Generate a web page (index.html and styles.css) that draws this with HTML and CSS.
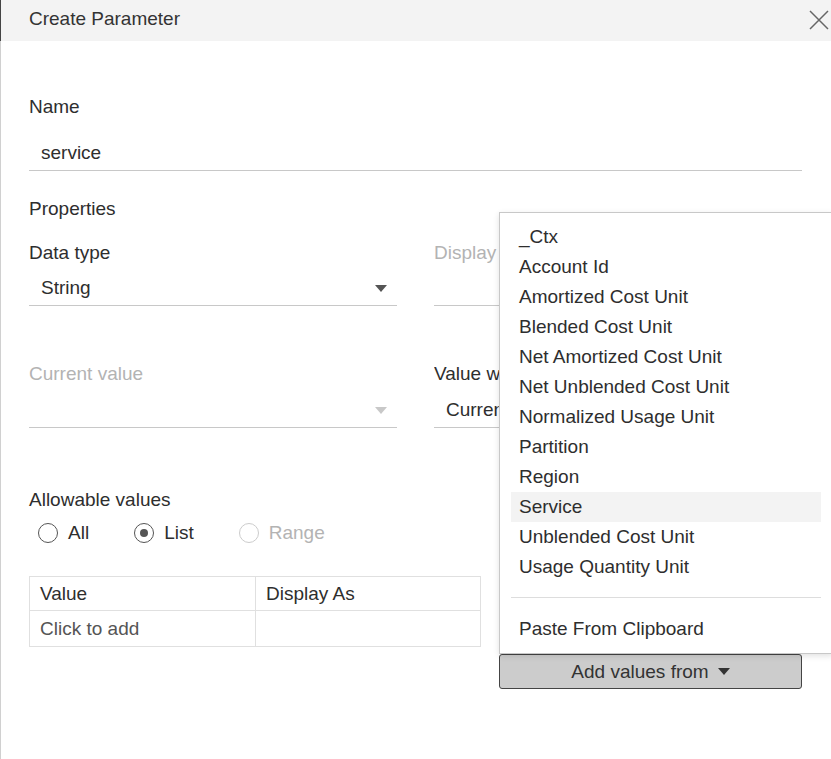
FILE: index.html
```html
<!DOCTYPE html>
<html>
<head>
<meta charset="utf-8">
<link rel="stylesheet" href="styles.css">
</head>
<body>
<div class="dialog">
  <div class="header">
    <span class="title">Create Parameter</span>
    <svg class="close" width="20" height="20" viewBox="0 0 20 20"><path d="M1 1 L19 19 M19 1 L1 19" stroke="#666" stroke-width="1.5" fill="none"/></svg>
  </div>
  <div class="content">
    <div class="label name-label">Name</div>
    <div class="field name-field">service</div>

    <div class="label props">Properties</div>

    <div class="grid">
      <div class="col">
        <div class="label">Data type</div>
        <div class="field select"><span>String</span><span class="tri"></span></div>
      </div>
      <div class="col">
        <div class="label disabled"><span class="clip">Display format</span></div>
        <div class="field select"><span></span></div>
      </div>
      <div class="col row2">
        <div class="label disabled">Current value</div>
        <div class="field select"><span></span><span class="tri light"></span></div>
      </div>
      <div class="col row2">
        <div class="label"><span class="clip">Value when workbook opens</span></div>
        <div class="field select"><span class="clip short">Current value</span></div>
      </div>
    </div>

    <div class="label allow">Allowable values</div>
    <div class="radios">
      <label class="radio"><span class="circle"></span>All</label>
      <label class="radio"><span class="circle checked"></span>List</label>
      <label class="radio disabled"><span class="circle"></span>Range</label>
    </div>

    <div class="listarea">
      <table class="values">
        <tr><th class="c1">Value</th><th>Display As</th></tr>
        <tr><td class="c1 hint">Click to add</td><td></td></tr>
      </table>
      <div class="side">
        <button class="addbtn">Add values from <span class="tri dark"></span></button>
      </div>
    </div>
  </div>

  <div class="menu">
    <div class="item">_Ctx</div>
    <div class="item">Account Id</div>
    <div class="item">Amortized Cost Unit</div>
    <div class="item">Blended Cost Unit</div>
    <div class="item">Net Amortized Cost Unit</div>
    <div class="item">Net Unblended Cost Unit</div>
    <div class="item">Normalized Usage Unit</div>
    <div class="item">Partition</div>
    <div class="item">Region</div>
    <div class="item hover">Service</div>
    <div class="item">Unblended Cost Unit</div>
    <div class="item">Usage Quantity Unit</div>
    <div class="sep"></div>
    <div class="item">Paste From Clipboard</div>
  </div>
</div>
</body>
</html>
```

FILE: styles.css
```css
html, body {
  margin: 0;
  padding: 0;
  background: #fff;
}
body {
  font-family: "Liberation Sans", Arial, sans-serif;
  font-size: 19px;
  color: #2e2e2e;
}
.dialog {
  position: relative;
  width: 831px;
  height: 759px;
  overflow: hidden;
  background: #fff;
}
.header {
  height: 41px;
  background: #f3f3f3;
  display: flex;
  align-items: center;
  justify-content: space-between;
  padding-left: 29px;
  padding-right: 2px;
  box-shadow: inset 1px 0 0 #444;
}
.title {
  font-size: 19px;
  color: #333;
  margin-top: -3px;
}
.close {
  display: block;
  margin-top: -1px;
}
.content {
  border-left: 1px solid #d0d0d0;
  height: 718px;
  box-sizing: border-box;
  padding: 54px 29px 0 28px;
}
.label {
  height: 24px;
  line-height: 24px;
  white-space: nowrap;
}
.disabled {
  color: #b3b3b3;
}
.clip {
  display: inline-block;
  max-width: 65px;
  overflow: hidden;
  white-space: nowrap;
  vertical-align: top;
}
.clip.short {
  max-width: 53px;
}
.field {
  height: 34px;
  line-height: 34px;
  border-bottom: 1px solid #c8c8c8;
  padding-left: 12px;
  white-space: nowrap;
  overflow: hidden;
}
.name-field {
  margin-top: 17px;
}
.props {
  margin-top: 26px;
}
.grid {
  display: grid;
  grid-template-columns: 368px 368px;
  column-gap: 37px;
  margin-top: 20px;
}
.grid .field {
  margin-top: 6px;
}
.grid .row2 .field {
  margin-top: 7px;
}
.row2 {
  margin-top: 56px;
}
.select {
  display: flex;
  justify-content: space-between;
  align-items: center;
  padding-right: 10px;
}
.tri {
  display: inline-block;
  width: 0;
  height: 0;
  border-left: 6px solid transparent;
  border-right: 6px solid transparent;
  border-top: 7px solid #555;
}
.tri.light {
  border-top-color: #c8c8c8;
}
.allow {
  margin-top: 60px;
}
.radios {
  display: flex;
  align-items: center;
  height: 24px;
  margin-top: 9px;
  padding-left: 9px;
}
.radio {
  display: flex;
  align-items: center;
  gap: 10px;
  margin-right: 45px;
}
.radio.disabled {
  color: #b3b3b3;
}
.circle {
  width: 18px;
  height: 18px;
  border: 1px solid #555;
  border-radius: 50%;
  box-sizing: content-box;
  position: relative;
}
.radio.disabled .circle {
  border-color: #ccc;
}
.circle.checked::after {
  content: "";
  position: absolute;
  left: 5px;
  top: 5px;
  width: 8px;
  height: 8px;
  border-radius: 50%;
  background: #555;
}
.listarea {
  display: flex;
  align-items: flex-start;
  margin-top: 31px;
  gap: 18px;
}
.values {
  border-collapse: collapse;
  width: 453px;
  border: 1px solid #e0e0e0;
}
.values th, .values td {
  text-align: left;
  font-weight: normal;
  padding: 0 0 0 10px;
  border: 1px solid #e0e0e0;
}
.values th {
  height: 33px;
}
.values td {
  height: 35px;
}
.values .c1 {
  width: 215px;
}
.hint {
  color: #555;
}
.side {
  padding-top: 78px;
}
.addbtn {
  width: 303px;
  height: 35px;
  background: #cccccc;
  border: 1px solid #444;
  border-radius: 3px;
  font-family: inherit;
  font-size: 19px;
  color: #333;
  display: flex;
  align-items: center;
  justify-content: center;
  gap: 9px;
  padding: 0;
}
.tri.dark {
  border-top-color: #333;
}
.menu {
  position: absolute;
  left: 499px;
  top: 212px;
  width: 334px;
  box-sizing: border-box;
  background: #fff;
  border: 1px solid #c8c8c8;
  box-shadow: 0 2px 6px rgba(0,0,0,0.12);
  padding: 9px 11px 9px 11px;
}
.item {
  height: 30px;
  line-height: 30px;
  padding-left: 8px;
  white-space: nowrap;
}
.item.hover {
  background: #f3f3f3;
}
.sep {
  height: 1px;
  background: #ddd;
  margin: 15px 0 16px 0;
}
```
